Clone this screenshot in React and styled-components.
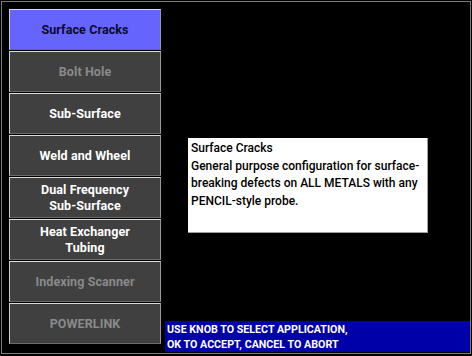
import styled, { createGlobalStyle } from "styled-components";

const GlobalStyle = createGlobalStyle`
    html, body {
        margin: 0;
        padding: 0;
        background: #000000;
    }
`;

const apps = [
    { label: ["Surface Cracks"], state: "selected" },
    { label: ["Bolt Hole"], state: "disabled" },
    { label: ["Sub-Surface"], state: "enabled" },
    { label: ["Weld and Wheel"], state: "enabled" },
    { label: ["Dual Frequency", "Sub-Surface"], state: "enabled" },
    { label: ["Heat Exchanger", "Tubing"], state: "enabled" },
    { label: ["Indexing Scanner"], state: "disabled" },
    { label: ["POWERLINK"], state: "disabled" },
];

function AppButton({ label, state }) {
    return (
        <Button $state={state}>
            {label.map((line) => (<span key={line}>{line}</span>))}
        </Button>
    );
}

export default function App() {
    return (
        <>
            <GlobalStyle />
            <Screen>
                <Frame>
                    <Menu>
                        {apps.map((app) => (<AppButton key={app.label[0]} {...app} />))}
                    </Menu>

                    <Side>
                        <Description>
                            <p>Surface Cracks</p>
                            <p>General purpose configuration for surface-breaking defects on ALL METALS with any PENCIL-style probe.</p>
                        </Description>

                        <Prompt>
                            <p>USE KNOB TO SELECT APPLICATION,</p>
                            <p>OK TO ACCEPT, CANCEL TO ABORT</p>
                        </Prompt>
                    </Side>
                </Frame>
            </Screen>
        </>
    );
}

const Screen = styled.div`
    width: 472px;
    height: 356px;
    background: #000000;
    padding: 1px 0px 0px 1px;
    box-sizing: border-box;
    font-family: Roboto, 'Liberation Sans', sans-serif;
`;

const Frame = styled.div`
    display: flex;
    width: 470px;
    height: 353px;
    box-sizing: border-box;
    border: 1px solid #7c7c7c;
    background: #000000;
`;

const Menu = styled.div`
    display: flex;
    flex-direction: column;
    gap: 1px;
    padding: 7px 0px 0px 7px;
`;

const colors = {
    selected: { bg: "#6565fe", fg: "#0a0a2a" },
    enabled: { bg: "#404040", fg: "#ffffff" },
    disabled: { bg: "#404040", fg: "#8a8a8a" },
};

const Button = styled.div`
    display: flex;
    flex-direction: column;
    justify-content: center;
    align-items: center;
    width: 152px;
    height: 41px;
    box-sizing: border-box;
    background: ${(p) => colors[p.$state].bg};
    color: ${(p) => colors[p.$state].fg};
    border-top: 1px solid #dcdcdc;
    border-left: 1px solid #d0d0d0;
    border-right: 1px solid #9a9a9a;
    border-bottom: 1px solid #6a6a6a;
    font-size: 12.5px;
    font-weight: 700;
    line-height: 16px;
    letter-spacing: 0.1px;
`;

const Side = styled.div`
    display: flex;
    flex-direction: column;
    flex: 1;
`;

const Description = styled.div`
    width: 242px;
    height: 97px;
    box-sizing: border-box;
    margin: 135px 0px 0px 26px;
    padding: 2px 3px;
    background: #ffffff;
    border: 1px solid #000000;
    box-shadow: inset -1px -1px 0px #a0a0a0;
    color: #000000;
    font-size: 12px;
    font-weight: 500;
    line-height: 17.5px;

    p {
        margin: 0px;
    }
`;

const Prompt = styled.div`
    margin: auto 0px 1px 4px;
    height: 31px;
    padding: 1px 2px 0px 2px;
    box-sizing: border-box;
    background: #0000a8;
    color: #ffffff;
    font-size: 10.7px;
    font-weight: 700;
    line-height: 15px;

    p {
        margin: 0px;
    }
`;
